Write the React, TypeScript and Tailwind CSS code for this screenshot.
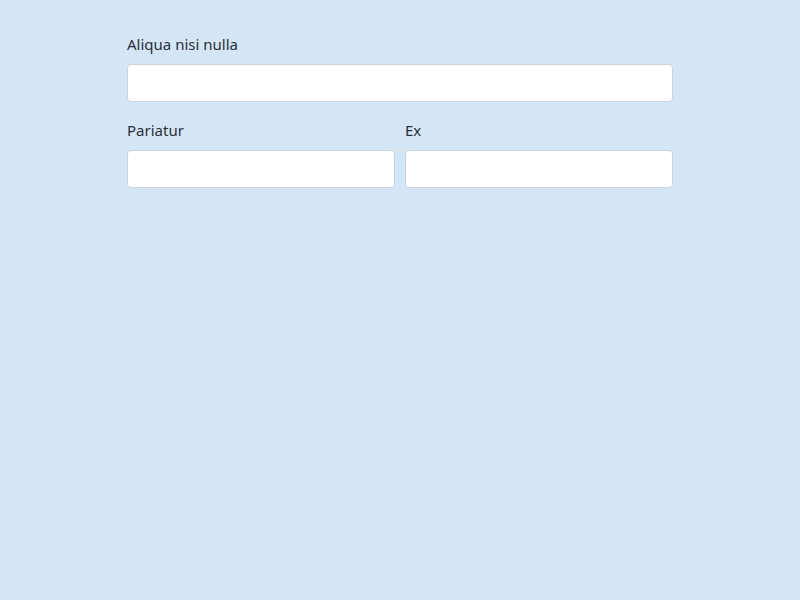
export default function App() {
  return (
    <div className="min-h-[600px] w-full bg-[#d4e6f5] pt-[33px] font-['Noto_Sans',sans-serif] text-[15px] text-[#2b2f36]">
      <form className="mx-auto flex w-[546px] flex-col gap-[17px]">
        <div className="flex flex-col">
          <label className="mb-[9px] leading-[22px]">Aliqua nisi nulla</label>
          <input
            type="text"
            className="h-[38px] w-full rounded-[4px] border border-[#cdd3db] bg-white px-3 outline-none"
          />
        </div>
        <div className="flex gap-[10px]">
          <div className="flex flex-1 flex-col">
            <label className="mb-[9px] leading-[22px]">Pariatur</label>
            <input
              type="text"
              className="h-[38px] w-full rounded-[4px] border border-[#cdd3db] bg-white px-3 outline-none"
            />
          </div>
          <div className="flex flex-1 flex-col">
            <label className="mb-[9px] leading-[22px]">Ex</label>
            <input
              type="text"
              className="h-[38px] w-full rounded-[4px] border border-[#cdd3db] bg-white px-3 outline-none"
            />
          </div>
        </div>
      </form>
    </div>
  );
}
